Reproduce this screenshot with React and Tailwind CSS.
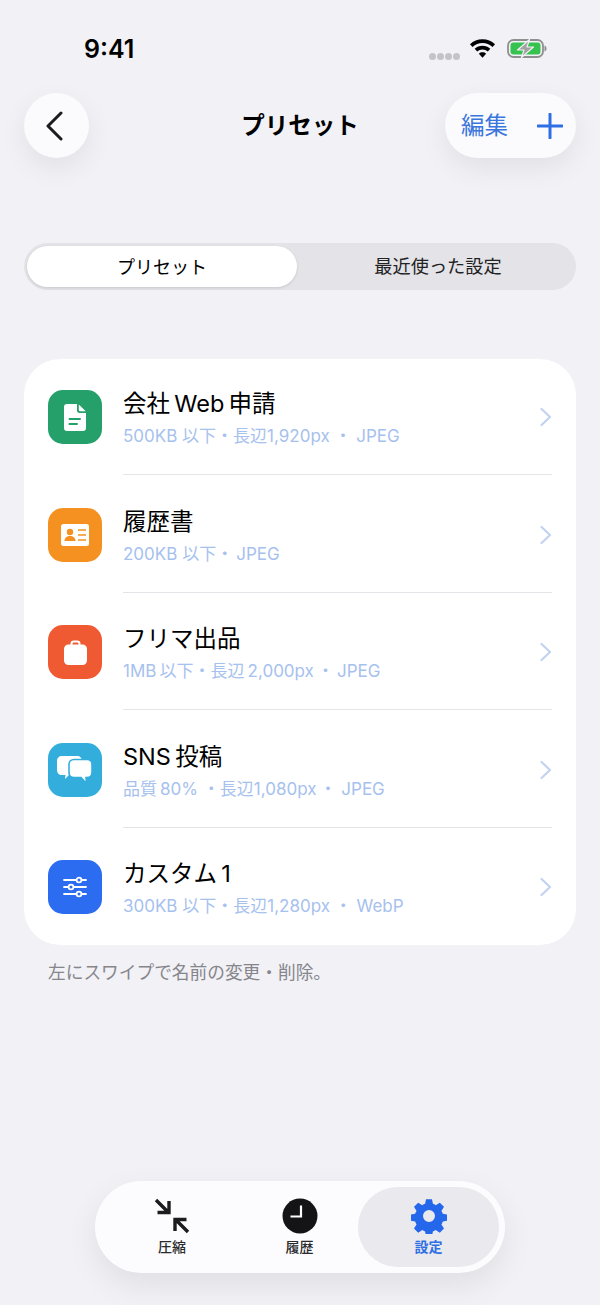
import React from 'react';

const FONT = "font-['Inter','Noto_Sans_CJK_JP',sans-serif]";

const DocIcon = () => (
  <svg width="22" height="27" viewBox="0 0 22 27">
    <path d="M3 0h10v6.500c0 1.400 1.100 2.500 2.500 2.500H22v15a3 3 0 0 1-3 3H3a3 3 0 0 1-3-3V3a3 3 0 0 1 3-3z" fill="#fff" />
    <path d="M14.800 .5L21.700 7.300h-5.400a1.500 1.500 0 0 1-1.500-1.500z" fill="#fff" />
    <path d="M5.500 15h10.500M5.500 20h7.500" stroke="#25a06a" strokeWidth="2" strokeLinecap="round" />
  </svg>
);

const CardIcon = () => (
  <svg width="28" height="22" viewBox="0 0 28 22">
    <rect width="28" height="22" rx="2.500" fill="#fff" />
    <circle cx="9" cy="8" r="3.200" fill="#f59121" />
    <path d="M3.500 17c0-3.500 2.500-5 5.500-5s5.500 1.500 5.500 5z" fill="#f59121" />
    <path d="M17 6h8M17 11h8M17 16h8" stroke="#f59121" strokeWidth="1.700" />
  </svg>
);

const BagIcon = () => (
  <svg width="23" height="25" viewBox="0 0 23 25">
    <path d="M7.500 6V3.800A2.300 2.300 0 0 1 9.800 1.500h3.400a2.300 2.300 0 0 1 2.300 2.300V6" fill="none" stroke="#fff" strokeWidth="2" />
    <rect y="4.500" width="23" height="20.500" rx="4.500" fill="#fff" />
  </svg>
);

const ChatIcon = () => (
  <svg width="36" height="30" viewBox="0 0 36 30">
    <path d="M5 1h15c3 0 5 2 5 5v9c0 3-2 5-5 5h-8l-4 4 .5-4H5c-3 0-5-2-5-5V6c0-3 2-5 5-5z" fill="#fff" />
    <path d="M17 4.500h13c3 0 5 2 5 5v8c0 3-2 5-5 5h-1l.5 6-5.500-6h-7c-3 0-5-2-5-5v-8c0-3 2-5 5-5z" fill="#fff" stroke="#33aedc" strokeWidth="1.600" />
  </svg>
);

const SlidersIcon = () => (
  <svg width="24" height="22" viewBox="0 0 24 22" fill="none" stroke="#fff" strokeWidth="1.800" strokeLinecap="round">
    <path d="M1 4h22M1 11h22M1 18h22" />
    <circle cx="16" cy="4" r="2.400" fill="#2b6cf0" />
    <circle cx="8" cy="11" r="2.400" fill="#2b6cf0" />
    <circle cx="16" cy="18" r="2.400" fill="#2b6cf0" />
  </svg>
);

const Wifi = () => (
  <svg width="25" height="19" viewBox="0 0 23 17">
    <path d="M11.500 0C7 0 3.200 1.700 0 4.500l2.300 2.600C5 4.800 8 3.400 11.500 3.400s6.500 1.400 9.200 3.700L23 4.500C19.800 1.700 16 0 11.500 0z" fill="#000" />
    <path d="M11.500 6c-2.900 0-5.200 1-7.200 2.800l2.300 2.500c1.400-1.200 3-1.900 4.900-1.900s3.500.7 4.900 1.900l2.300-2.500C16.700 7 14.400 6 11.500 6z" fill="#000" />
    <path d="M11.500 12c-1.300 0-2.400.4-3.300 1.300l3.300 3.700 3.300-3.700c-.9-.9-2-1.300-3.300-1.300z" fill="#000" />
  </svg>
);

const Battery = () => (
  <svg width="40" height="19" viewBox="0 0 40 19">
    <rect x="1" y="1" width="35" height="17" rx="5.500" fill="none" stroke="#8f8f8f" strokeWidth="1.800" />
    <rect x="3.500" y="3.500" width="30" height="12" rx="3" fill="#36c24f" />
    <path d="M37.500 6.500v6c1.300-.4 2-1.500 2-3s-.7-2.600-2-3z" fill="#8f8f8f" />
    <path d="M22.500 0.500L10.500 11h6.500L14.500 18.500 26.500 8h-6.500z" fill="#a2a2a2" stroke="#f1f1f6" strokeWidth="1.200" strokeLinejoin="round" />
  </svg>
);

const presets = [
  { title: '会社\u2009Web\u2009申請', sub: '500KB 以下・長辺1,920px ・ JPEG', color: 'bg-[#25a06a]', Icon: DocIcon },
  { title: '履歴書', sub: '200KB 以下・\u2009JPEG', color: 'bg-[#f59121]', Icon: CardIcon },
  { title: 'フリマ出品', sub: '1MB\u2009以下・長辺\u20092,000px\u2009・\u2009JPEG', color: 'bg-[#f05a33]', Icon: BagIcon },
  { title: 'SNS\u2009投稿', sub: '品質\u200980% ・長辺1,080px\u2009・ JPEG', color: 'bg-[#33aedc]', Icon: ChatIcon },
  { title: 'カスタム\u20091', sub: '300KB 以下・長辺1,280px ・ WebP', color: 'bg-[#2b6cf0]', Icon: SlidersIcon },
];

const PresetRow = ({ preset, last }) => {
  const Icon = preset.Icon;
  return (
    <div className="flex h-[117.500px] pl-6">
      <div className={`mt-[31px] flex h-[54px] w-[54px] shrink-0 items-center justify-center rounded-[15px] ${preset.color}`}>
        <Icon />
      </div>
      <div className={`ml-[21px] mr-6 flex h-[116px] flex-1 items-start border-[#e4e4e8] ${last ? '' : 'border-b'}`}>
        <div className="flex-1 pt-[27px]">
          <div className="text-[23.500px] leading-[36px] text-black">{preset.title}</div>
          <div className="mt-[1px] text-[17px] leading-[26px] text-[#a6c1ee]">{preset.sub}</div>
        </div>
        <svg className="mt-[48px]" width="12" height="20" viewBox="0 0 12 20" fill="none" stroke="#c3d2f0" strokeWidth="2.200" strokeLinecap="round" strokeLinejoin="round">
          <path d="M1.500 2l8.500 8-8.500 8" />
        </svg>
      </div>
    </div>
  );
};

export default function App() {
  return (
    <div className={`flex h-[1305px] w-[600px] flex-col overflow-hidden bg-[#f1f1f6] ${FONT}`}>
      {/* Status bar */}
      <div className="flex h-[93px] items-start justify-between pl-[84px] pr-[53px] pt-[32px]">
        <span className="text-[25px] font-semibold leading-[34px] text-black">9:41</span>
        <div className="mt-[7px] flex items-start">
          <div className="mt-[14px] flex gap-[1px]">
            <span className="h-[7px] w-[7px] rounded-full bg-[#c4c4c8]" />
            <span className="h-[7px] w-[7px] rounded-full bg-[#c4c4c8]" />
            <span className="h-[7px] w-[7px] rounded-full bg-[#c4c4c8]" />
            <span className="h-[7px] w-[7px] rounded-full bg-[#c4c4c8]" />
          </div>
          <div className="ml-[10px]"><Wifi /></div>
          <div className="ml-[12px]"><Battery /></div>
        </div>
      </div>

      {/* Nav */}
      <div className="flex h-[65px] items-center justify-between px-6">
        <div className="w-[131px]">
          <button className="flex h-[65px] w-[65px] items-center justify-center rounded-full bg-[#fbfbfe] pr-[3px] shadow-[0_10px_28px_rgba(0,0,0,0.07)]">
            <svg width="20" height="30" viewBox="0 0 20 30" fill="none" stroke="#1c1c1e" strokeWidth="3" strokeLinecap="round" strokeLinejoin="round">
              <path d="M16 2L3 15l13 13" />
            </svg>
          </button>
        </div>
        <h1 className="text-[23.500px] font-bold text-black">プリセット</h1>
        <div className="flex h-[65px] w-[131px] items-center justify-between rounded-full bg-[#fbfbfe] pl-[16px] pr-[13px] shadow-[0_10px_28px_rgba(0,0,0,0.07)]">
          <span className="text-[23.500px] text-[#3a76dc]">編集</span>
          <svg width="26" height="26" viewBox="0 0 26 26" fill="none" stroke="#2f6fe4" strokeWidth="3" strokeLinecap="round">
            <path d="M13 1v24M1 13h24" />
          </svg>
        </div>
      </div>

      {/* Segmented control */}
      <div className="mx-6 mt-[85px] flex h-[47px] rounded-full bg-[#e3e3e8] p-[3px]">
        <div className="flex w-[270px] items-center justify-center rounded-full bg-white pt-[1px] text-[18px] text-black shadow-[0_1px_3px_rgba(0,0,0,0.12)]">プリセット</div>
        <div className="flex flex-1 items-center justify-center pl-[6px] pt-[1px] text-[18.200px] text-[#222]">最近使った設定</div>
      </div>

      {/* Preset list */}
      <div className="mx-6 mt-[69px] h-[586px] rounded-[36px] bg-white">
        {presets.map((p, i) => (
          <PresetRow key={p.title} preset={p} last={i === presets.length - 1} />
        ))}
      </div>
      <p className="mt-[15px] pl-12 text-[17.700px] leading-[26px] text-[#85858b]">左にスワイプで名前の変更・削除。</p>

      {/* Tab bar */}
      <div className="mx-auto mt-[195px] flex h-[92px] w-[410px] items-center rounded-full bg-[#fcfcff] px-[6px] shadow-[0_12px_32px_rgba(0,0,0,0.08)]">
        <div className="flex h-[80px] w-[142px] flex-col items-center justify-center">
          <svg width="36" height="36" viewBox="0 0 36 36" fill="none" stroke="#1c1c1e" strokeWidth="3.400">
            <path d="M2 2l13 13M3.500 14.500H15V3" />
            <path d="M34 34L21 21M32.500 21.500H21V33" />
          </svg>
          <span className="mt-[4px] text-[14px] font-medium leading-[18px] text-[#2a2a2c]">圧縮</span>
        </div>
        <div className="flex h-[80px] w-[113px] flex-col items-center justify-center">
          <svg width="36" height="36" viewBox="0 0 36 36">
            <circle cx="18" cy="18" r="17.500" fill="#141416" />
            <path d="M19 7.500V18.500H8.500" fill="none" stroke="#fff" strokeWidth="2.200" />
          </svg>
          <span className="mt-[4px] text-[14px] font-medium leading-[18px] text-[#2a2a2c]">履歴</span>
        </div>
        <div className="ml-auto flex h-[80px] w-[141px] flex-col items-center justify-center rounded-full bg-[#e9e9ee]">
          <svg width="36" height="36" viewBox="0 0 24 24" fill="#2567ea">
            <path fillRule="evenodd" d="M10 .8h4l.6 3.100c.7.2 1.300.5 1.900.9l2.700-1.700 2.800 2.800-1.700 2.700c.4.600.7 1.200.9 1.900l3 .6v4l-3 .6c-.2.7-.5 1.300-.9 1.900l1.700 2.700-2.800 2.800-2.700-1.700c-.6.4-1.200.7-1.900.9l-.6 3h-4l-.6-3c-.7-.2-1.300-.5-1.900-.9l-2.700 1.700-2.800-2.800 1.700-2.700c-.4-.6-.7-1.200-.9-1.900l-3-.6v-4l3-.6c.2-.7.5-1.300.9-1.900L2.000 5.900l2.800-2.800 2.700 1.700c.6-.4 1.200-.7 1.900-.9zM12 8a4 4 0 1 0 0 8 4 4 0 0 0 0-8z" />
          </svg>
          <span className="mt-[4px] text-[14px] font-bold leading-[18px] text-[#2f6fe4]">設定</span>
        </div>
      </div>
    </div>
  );
}
